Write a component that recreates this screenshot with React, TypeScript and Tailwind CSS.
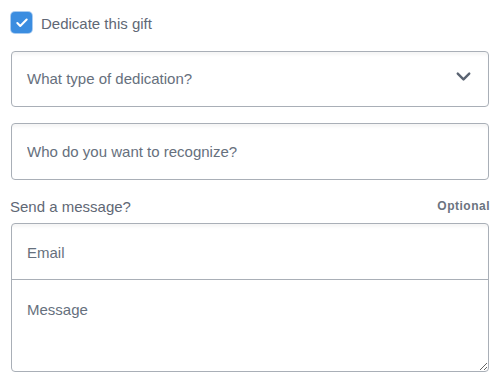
import { ChevronDown, Check } from "lucide-react";

const App = () => {
    return (
        <div className="w-[500px] h-[382px] bg-white px-[11px] pt-[12px] font-['Liberation_Sans',Arial,sans-serif]">
            <label className="flex items-center gap-[9px] h-[21px]">
                <span className="w-[21px] h-[21px] rounded-[4px] bg-[#3b8de0] ring-1 ring-[#a9ccf2] flex items-center justify-center">
                    <Check className="w-[14px] h-[14px] text-white" strokeWidth={3.5} />
                </span>
                <span className="text-[15px] text-[#5f6875] pt-[3px]">Dedicate this gift</span>
            </label>

            <div className="mt-[18px] relative h-[56px] rounded-[4px] border border-[#a9afb7] shadow-[inset_0_4px_3px_-1px_rgba(0,0,0,0.04)] flex items-center px-[15px]">
                <span className="text-[15px] text-[#66707d]">What type of dedication?</span>
                <ChevronDown className="absolute right-[13px] top-[13px] w-[23px] h-[23px] text-[#5b6472]" strokeWidth={2.5} />
            </div>

            <input
                className="mt-[16px] block w-full h-[57px] rounded-[4px] border border-[#a9afb7] shadow-[inset_0_4px_3px_-1px_rgba(0,0,0,0.04)] px-[15px] text-[15px] outline-none placeholder:text-[#66707d]"
                placeholder="Who do you want to recognize?"
            />

            <div className="mt-[16px] flex items-center justify-between -ml-[1px] -mr-[1px]">
                <span className="text-[15px] text-[#5f6875]">Send a message?</span>
                <span className="text-[12px] font-bold text-[#6b7480] tracking-[0.5px] -mt-[3px]">Optional</span>
            </div>

            <div className="mt-[4px] rounded-[4px] border border-[#a9afb7] overflow-hidden">
                <input
                    className="block w-full h-[56px] border-b border-[#a9afb7] shadow-[inset_0_4px_3px_-1px_rgba(0,0,0,0.04)] px-[15px] pt-[2px] text-[15px] outline-none placeholder:text-[#66707d]"
                    placeholder="Email"
                />
                <textarea
                    className="block w-full h-[91px] px-[15px] pt-[21px] text-[15px] leading-[18px] outline-none placeholder:text-[#66707d] resize-y"
                    placeholder="Message"
                />
            </div>
        </div>
    );
};

export default App;
